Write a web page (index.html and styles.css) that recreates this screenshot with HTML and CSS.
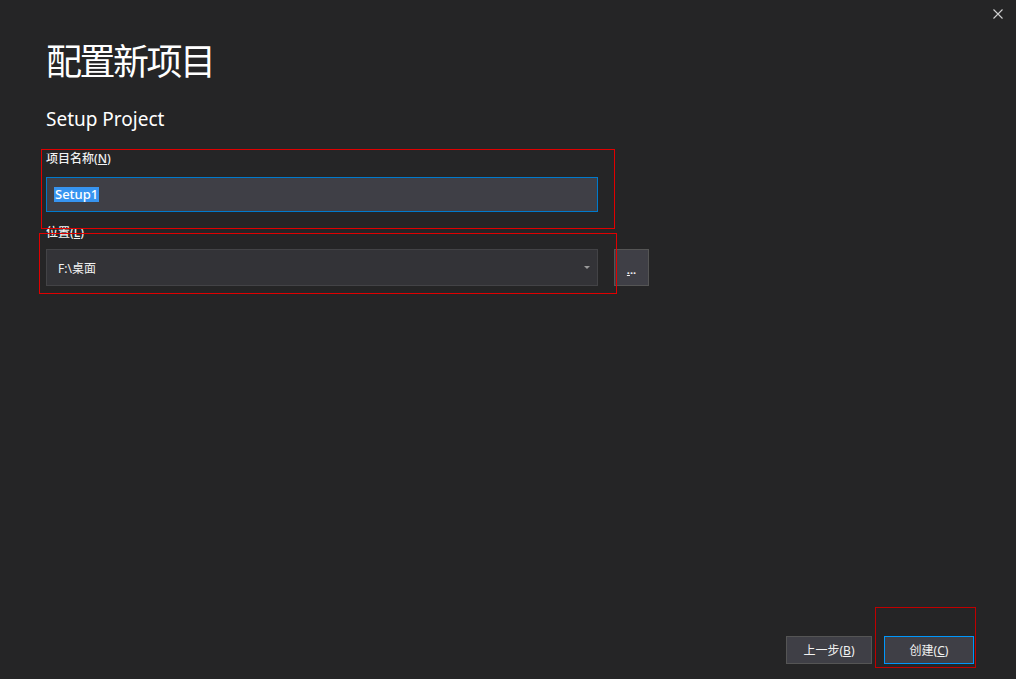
FILE: index.html
```html
<!DOCTYPE html>
<html lang="zh-CN">
<head>
<meta charset="utf-8">
<title>配置新项目</title>
<link rel="stylesheet" href="styles.css">
</head>
<body>
<div class="dialog">
  <button class="close" aria-label="关闭">
    <svg width="10" height="10" viewBox="0 0 10 10"><path d="M0.5 0.5 L9.5 9.5 M9.5 0.5 L0.5 9.5" stroke="#d0d0d0" stroke-width="1.1" fill="none"/></svg>
  </button>
  <main class="content">
    <h1 class="title">配置新项目</h1>
    <h2 class="subtitle">Setup Project</h2>
    <div class="field">
      <label class="label">项目名称(<u>N</u>)</label>
      <div class="input"><span class="selected">Setup1</span></div>
    </div>
    <div class="field">
      <label class="label label-loc">位置(<u>L</u>)</label>
      <div class="row">
        <div class="combo">
          <span class="combo-text">F:\桌面</span>
          <svg class="caret" width="6" height="3" viewBox="0 0 6 3"><path d="M0 0 H6 L3 3 Z" fill="#9a9a9a"/></svg>
        </div>
        <button class="browse"><u>.</u>..</button>
      </div>
    </div>
  </main>
  <footer class="footer">
    <button class="btn">上一步(<u>B</u>)</button>
    <button class="btn btn-primary">创建(<u>C</u>)</button>
  </footer>
  <div class="mark mark-name"></div>
  <div class="mark mark-loc"></div>
  <div class="mark mark-create"></div>
</div>
</body>
</html>
```
FILE: styles.css
```css
* { box-sizing: border-box; }
html, body {
  margin: 0;
  padding: 0;
  height: 100%;
  background: #252526;
}
body {
  font-family: "Noto Sans", "Noto Sans CJK SC", sans-serif;
  color: #f1f1f1;
  overflow: hidden;
}
.dialog {
  position: relative;
  height: 679px;
  display: flex;
  flex-direction: column;
}
.close {
  position: absolute;
  top: 8px;
  right: 12px;
  width: 12px;
  height: 12px;
  padding: 1px;
  border: 0;
  background: transparent;
  display: flex;
}
.content {
  padding: 41px 0 0 46px;
  display: flex;
  flex-direction: column;
}
.title {
  margin: 0;
  font-family: "Noto Sans CJK SC", sans-serif;
  font-weight: 400;
  font-size: 36px;
  line-height: 36px;
  letter-spacing: -2.5px;
  color: #ffffff;
}
.subtitle {
  margin: 30px 0 0 0;
  font-weight: 400;
  font-size: 19px;
  line-height: 24px;
  color: #ffffff;
}
.field {
  display: flex;
  flex-direction: column;
}
.label {
  margin-top: 20px;
  font-size: 12px;
  line-height: 16px;
  font-weight: 500;
  color: #f1f1f1;
}
.label-loc { margin-top: 13px; }
.label u { text-underline-offset: 1px; }
.input {
  margin-top: 10px;
  width: 552px;
  height: 35px;
  background: #3f3f46;
  border: 1px solid #007acc;
  display: flex;
  align-items: center;
  padding-left: 7px;
}
.selected {
  background: #3794f0;
  color: #ffffff;
  font-size: 13px;
  line-height: 15px;
  font-weight: 500;
  padding: 0 1px;
}
.row {
  margin-top: 8px;
  display: flex;
  gap: 16px;
}
.combo {
  width: 552px;
  height: 37px;
  background: #333337;
  border: 1px solid #434346;
  display: flex;
  align-items: center;
  padding: 0 4px 0 11px;
}
.combo-text {
  flex: 1;
  font-size: 12px;
  color: #f1f1f1;
}
.caret { margin-right: 3px; }
.browse {
  width: 35px;
  height: 37px;
  background: #3f3f46;
  border: 1px solid #555555;
  color: #f1f1f1;
  font-family: "Noto Sans", sans-serif;
  font-size: 11px;
  font-weight: 700;
  line-height: 1;
  padding: 4px 0 0;
  letter-spacing: 0;
}
.footer {
  margin-top: auto;
  display: flex;
  justify-content: flex-end;
  gap: 12px;
  padding: 0 42px 15px 0;
}
.btn {
  width: 86px;
  height: 28px;
  background: #3f3f46;
  border: 1px solid #555555;
  color: #f1f1f1;
  font-family: "Noto Sans", "Noto Sans CJK SC", sans-serif;
  font-size: 12px;
  padding: 0;
}
.btn-primary {
  width: 90px;
  border-color: #0097fb;
}
.mark {
  position: absolute;
  border: 1px solid #e00000;
  pointer-events: none;
}
.mark-name { left: 41px; top: 149px; width: 574px; height: 80px; }
.mark-loc { left: 39px; top: 233px; width: 578px; height: 61px; }
.mark-create { left: 875px; top: 607px; width: 101px; height: 61px; border-color: #c00000; }
```
